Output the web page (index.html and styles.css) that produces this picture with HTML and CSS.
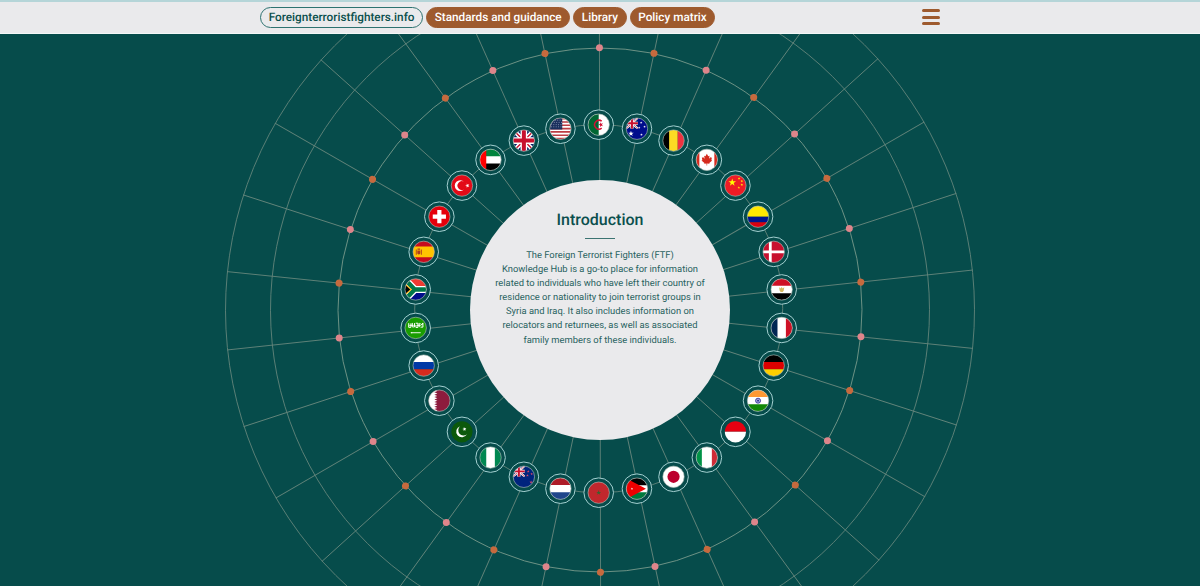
FILE: index.html
```html
<!DOCTYPE html>
<html lang="en">
<head>
<meta charset="utf-8">
<title>Foreignterroristfighters.info</title>
<link rel="stylesheet" href="styles.css">
</head>
<body>
<header class="topbar">
  <nav class="nav">
    <a class="pill pill-outline">Foreignterroristfighters.info</a>
    <a class="pill">Standards and guidance</a>
    <a class="pill">Library</a>
    <a class="pill">Policy matrix</a>
  </nav>
  <div class="menu"><span></span><span></span><span></span></div>
</header>
<main class="stage">
<svg class="wheel" width="1200" height="552" viewBox="0 34 1200 552">
  <defs>
    <clipPath id="round"><circle r="10.6"/></clipPath>
    <g id="ring"><circle class="ring" r="14.8"/></g>
    <circle id="rim" class="rim" r="10.7"/>
    <path id="star" d="M0-1 .23-.31H.95L.36.12.59.81 0 .38-.59.81-.36.12-.95-.31H-.23Z"/>
    <g id="jack">
      <path fill="#012169" d="M-12-12H12V12H-12Z"/>
      <path stroke="#fff" stroke-width="4.4" d="M-12-12 12 12M12-12-12 12"/>
      <path stroke="#c8102e" stroke-width="1.3" d="M-12-12 12 12M12-12-12 12"/>
      <path stroke="#fff" stroke-width="6.6" d="M0-12V12M-12 0H12"/>
      <path stroke="#c8102e" stroke-width="4" d="M0-12V12M-12 0H12"/>
    </g>
  </defs>
  <g transform="translate(600 310) rotate(-.12)">
    <g class="grid">
      <path id="sp" d="M0-375V375"/>
      <use href="#sp" transform="rotate(12)"/><use href="#sp" transform="rotate(24)"/><use href="#sp" transform="rotate(36)"/><use href="#sp" transform="rotate(48)"/><use href="#sp" transform="rotate(60)"/><use href="#sp" transform="rotate(72)"/><use href="#sp" transform="rotate(84)"/><use href="#sp" transform="rotate(96)"/><use href="#sp" transform="rotate(108)"/><use href="#sp" transform="rotate(120)"/><use href="#sp" transform="rotate(132)"/><use href="#sp" transform="rotate(144)"/><use href="#sp" transform="rotate(156)"/><use href="#sp" transform="rotate(168)"/>
      <circle r="374.5"/><circle r="329.5"/><circle class="strong" r="262"/>
      <circle cx="-1.3" cy="-1.3" r="184"/>
    </g>
    <circle class="dots pink" r="262.3" pathLength="360" transform="rotate(-90)"/>
    <circle class="dots orange" r="262.3" pathLength="360" transform="rotate(-78)"/>
  </g>
  <circle class="disc" cx="600" cy="310" r="130"/>
  <g transform="translate(598.7 308.7)">
    <g transform="translate(0 -184)"><use href="#ring"/><g clip-path="url(#round)"><path fill="#fff" d="M-12-12H12V12H-12Z"/><path fill="#006633" d="M-12-12H0V12H-12Z"/><path d="M3-3.5A4.4 4.4 0 1 0 3 3.5" fill="none" stroke="#d21034" stroke-width="1.5"/><use href="#star" transform="translate(2.2 0) rotate(-90) scale(2.6)" fill="#d21034"/></g><use href="#rim"/></g>
    <g transform="rotate(12) translate(0 -184) rotate(-12)"><use href="#ring"/><g clip-path="url(#round)"><path fill="#000d8c" d="M-12-12H12V12H-12Z"/><svg x="-11" y="-11" width="12" height="11" viewBox="-12 -12 24 24" preserveAspectRatio="none"><use href="#jack"/></svg><g fill="#fff"><use href="#star" transform="translate(-6 5) scale(2.9)"/><use href="#star" transform="translate(4.2 -6) scale(1.3)"/><use href="#star" transform="translate(7.6 -2) scale(1.3)"/><use href="#star" transform="translate(2.2 -1) scale(1.3)"/><use href="#star" transform="translate(4.5 6) scale(1.4)"/></g></g><use href="#rim"/></g>
    <g transform="rotate(24) translate(0 -184) rotate(-24)"><use href="#ring"/><g clip-path="url(#round)"><path d="M-12-12H-4V12H-12Z"/><path fill="#fdda24" d="M-4.4-12H4.2V12H-4.4Z"/><path fill="#ef3340" d="M4.2-12H12V12H4.2Z"/></g><use href="#rim"/></g>
    <g transform="rotate(36) translate(0 -184) rotate(-36)"><use href="#ring"/><g clip-path="url(#round)"><path fill="#fff" d="M-12-12H12V12H-12Z"/><path fill="#d52b1e" d="M-12-12H-7.5V12H-12ZM7.5-12H12V12H7.5ZM0-6 1.4-3.6 2.7-4.2 2.2-1 3.6-2.6 5-2.2 4.5.3 5.4.6 2.4 3.2 2.7 4 .3 3.6V5.7H-.3V3.6L-2.7 4-2.4 3.2-5.4.6-4.5.3-5-2.2-3.6-2.6-2.2-1-2.7-4.2-1.4-3.6Z"/></g><use href="#rim"/></g>
    <g transform="rotate(48) translate(0 -184) rotate(-48)"><use href="#ring"/><g clip-path="url(#round)"><path fill="#ee1c25" d="M-12-12H12V12H-12Z"/><g fill="#ff0"><use href="#star" transform="translate(-3.2 -3) scale(4)"/><use href="#star" transform="translate(3.6 -7.2) scale(1.4)"/><use href="#star" transform="translate(6.4 -4.4) scale(1.4)"/><use href="#star" transform="translate(6.4 -.8) scale(1.4)"/><use href="#star" transform="translate(3.4 2) scale(1.4)"/></g></g><use href="#rim"/></g>
    <g transform="rotate(60) translate(0 -184) rotate(-60)"><use href="#ring"/><g clip-path="url(#round)"><path fill="#ffe800" d="M-12-12H12V0H-12Z"/><path fill="#00148e" d="M-12 0H12V5.6H-12Z"/><path fill="#da0010" d="M-12 5.6H12V12H-12Z"/></g><use href="#rim"/></g>
    <g transform="rotate(72) translate(0 -184) rotate(-72)"><use href="#ring"/><g clip-path="url(#round)"><path fill="#c8102e" d="M-12-12H12V12H-12Z"/><path stroke="#fff" stroke-width="2.8" d="M-3.4-12V12M-12 0H12"/></g><use href="#rim"/></g>
    <g transform="rotate(84) translate(0 -184) rotate(-84)"><use href="#ring"/><g clip-path="url(#round)"><path fill="#fff" d="M-12-12H12V12H-12Z"/><path fill="#ce1126" d="M-12-12H12V-3.8H-12Z"/><path d="M-12 3.8H12V12H-12Z"/><path fill="#d6b962" d="M-2.6-2.2-.8-1 0-2.6.8-1 2.6-2.2 2 1.4 1 2.5H-1L-2 1.4Z"/></g><use href="#rim"/></g>
    <g transform="rotate(96) translate(0 -184) rotate(-96)"><use href="#ring"/><g clip-path="url(#round)"><path fill="#fff" d="M-12-12H12V12H-12Z"/><path fill="#002654" d="M-12-12H-4.2V12H-12Z"/><path fill="#ce1126" d="M4.2-12H12V12H4.2Z"/></g><use href="#rim"/></g>
    <g transform="rotate(108) translate(0 -184) rotate(-108)"><use href="#ring"/><g clip-path="url(#round)"><path d="M-12-12H12V-3.6H-12Z"/><path fill="#d00" d="M-12-3.6H12V3.6H-12Z"/><path fill="#ffce00" d="M-12 3.6H12V12H-12Z"/></g><use href="#rim"/></g>
    <g transform="rotate(120) translate(0 -184) rotate(-120)"><use href="#ring"/><g clip-path="url(#round)"><path fill="#fff" d="M-12-12H12V12H-12Z"/><path fill="#f93" d="M-12-12H12V-3.6H-12Z"/><path fill="#128807" d="M-12 3.6H12V12H-12Z"/><circle r="2.5" fill="#aaaade" stroke="#22228f" stroke-width=".8"/><circle r=".9" fill="#22228f"/></g><use href="#rim"/></g>
    <g transform="rotate(132) translate(0 -184) rotate(-132)"><use href="#ring"/><g clip-path="url(#round)"><path fill="#e70011" d="M-12-12H12V0H-12Z"/><path fill="#fff" d="M-12 0H12V12H-12Z"/></g></g>
    <g transform="rotate(144) translate(0 -184) rotate(-144)"><use href="#ring"/><g clip-path="url(#round)"><path fill="#fff" d="M-12-12H12V12H-12Z"/><path fill="#009246" d="M-12-12H-5V12H-12Z"/><path fill="#ce2b37" d="M5-12H12V12H5Z"/></g><use href="#rim"/></g>
    <g transform="rotate(156) translate(0 -184) rotate(-156)"><use href="#ring"/><g clip-path="url(#round)"><path fill="#fff" d="M-12-12H12V12H-12Z"/><circle r="6.1" fill="#bc002d"/></g><use href="#rim"/></g>
    <g transform="rotate(168) translate(0 -184) rotate(-168)"><use href="#ring"/><g clip-path="url(#round)"><path fill="#fff" d="M-12-12H12V12H-12Z"/><path d="M-12-12H12V-3.5H-12Z"/><path fill="#007a3d" d="M-12 3.5H12V12H-12Z"/><path fill="#e00" d="M-12-11 9 0-12 11Z"/><use href="#star" transform="translate(-5) scale(1.3)" fill="#fff"/></g><use href="#rim"/></g>
    <g transform="translate(0 184)"><use href="#ring"/><g clip-path="url(#round)"><path fill="#c1272d" d="M-12-12H12V12H-12Z"/><use href="#star" transform="scale(2.6)" fill="#35642f"/></g><use href="#rim"/></g>
    <g transform="rotate(192) translate(0 -184) rotate(-192)"><use href="#ring"/><g clip-path="url(#round)"><path fill="#fff" d="M-12-12H12V12H-12Z"/><path fill="#ae1c28" d="M-12-12H12V-3.6H-12Z"/><path fill="#21468b" d="M-12 3.6H12V12H-12Z"/></g><use href="#rim"/></g>
    <g transform="rotate(204) translate(0 -184) rotate(-204)"><use href="#ring"/><g clip-path="url(#round)"><path fill="#00247d" d="M-12-12H12V12H-12Z"/><svg x="-11" y="-11" width="12" height="11" viewBox="-12 -12 24 24" preserveAspectRatio="none"><use href="#jack"/></svg><g fill="#d84b67"><use href="#star" transform="translate(4.4 -5.4) scale(1.5)"/><use href="#star" transform="translate(7.8 -2.8) scale(1.4)"/><use href="#star" transform="translate(3.6 -1.4) scale(1.5)"/><use href="#star" transform="translate(7.2 5.4) scale(1.7)"/></g></g><use href="#rim"/></g>
    <g transform="rotate(216) translate(0 -184) rotate(-216)"><use href="#ring"/><g clip-path="url(#round)"><path fill="#008751" d="M-12-12H12V12H-12Z"/><path fill="#fff" d="M-4.3-12H4.3V12H-4.3Z"/></g><use href="#rim"/></g>
    <g transform="rotate(228) translate(0 -184) rotate(-228)"><use href="#ring"/><g clip-path="url(#round)"><path fill="#0c590b" d="M-12-12H12V12H-12Z"/><path fill="#fff" d="M-1.8-5.6A5.7 5.7 0 1 0 5 2.5 4.8 4.8 0 1 1-1.8-5.6Z"/><use href="#star" transform="translate(2.5 -2.7) rotate(-15) scale(2.2)" fill="#fff"/></g></g>
    <g transform="rotate(240) translate(0 -184) rotate(-240)"><use href="#ring"/><g clip-path="url(#round)"><path fill="#8d1b3d" d="M-12-12H12V12H-12Z"/><path fill="#fff" d="M-12-12H-4.6L-2-9.6-5-8.4-2-7.2-5-6-2-4.8-5-3.6-2-2.4-5-1.2-2 0-5 1.2-2 2.4-5 3.6-2 4.8-5 6-2 7.2-5 8.4-2 9.6-5 12H-12Z"/></g><use href="#rim"/></g>
    <g transform="rotate(252) translate(0 -184) rotate(-252)"><use href="#ring"/><g clip-path="url(#round)"><path fill="#fff" d="M-12-12H12V-3.6H-12Z"/><path fill="#0039a6" d="M-12-3.6H12V3.6H-12Z"/><path fill="#d52b1e" d="M-12 3.6H12V12H-12Z"/></g><use href="#rim"/></g>
    <g transform="rotate(264) translate(0 -184) rotate(-264)"><use href="#ring"/><g clip-path="url(#round)"><path fill="#199d00" d="M-12-12H12V12H-12Z"/><path d="M-7-4.8V-.6H-4.8V-4.6M-3.4-5V-1H-1.2V-4.8M0-4.7H2.2V-.5H.2V-3M3.5-5V-.8M4.9-4.5 6-2.8 7.2-5V-.8H4.8M-6.4-2.6H-2M1-2.6H5" fill="none" stroke="#fff"/><path d="M-5 4.8H5M-4 4.2V5.4" stroke="#fff" stroke-width=".9"/></g><use href="#rim"/></g>
    <g transform="rotate(276) translate(0 -184) rotate(-276)"><use href="#ring"/><g clip-path="url(#round)"><path fill="#ef3b32" d="M-12-12H12V0H-12Z"/><path fill="#000c8a" d="M-12 0H12V12H-12Z"/><path d="M-12-11.5-1 0H12M-12 11.5-1 0" fill="none" stroke="#fff" stroke-width="7"/><path d="M-12-11.5-1 0H12M-12 11.5-1 0" fill="none" stroke="#007749" stroke-width="4.4"/><path fill="#000" stroke="#ffb81c" stroke-width="1.1" d="M-12-6.5-4.5 0-12 6.5Z"/></g><use href="#rim"/></g>
    <g transform="rotate(288) translate(0 -184) rotate(-288)"><use href="#ring"/><g clip-path="url(#round)"><path fill="#c60b1e" d="M-12-12H12V12H-12Z"/><path fill="#ffc400" d="M-12-5.3H12V5.3H-12Z"/><path fill="#ad3c20" d="M-7.9-2.3H-7V3H-7.9ZM-2.8-2.3H-1.9V3H-2.8ZM-6.4-1.3H-3.4V1.7Q-4.9 3.7-6.4 1.7ZM-6.2-3.4H-3.6V-2H-6.2Z"/></g><use href="#rim"/></g>
    <g transform="rotate(300) translate(0 -184) rotate(-300)"><use href="#ring"/><g clip-path="url(#round)"><path fill="#e5000b" d="M-12-12H12V12H-12Z"/><path stroke="#fff" stroke-width="4.2" d="M0-6.6V6.6M-6.6 0H6.6"/></g><use href="#rim"/></g>
    <g transform="rotate(312) translate(0 -184) rotate(-312)"><use href="#ring"/><g clip-path="url(#round)"><path fill="#e30a17" d="M-12-12H12V12H-12Z"/><path fill="#fff" d="M2.2-3.6A5.4 5.4 0 1 0 2.2 3.6 4.3 4.3 0 1 1 2.2-3.6Z"/><use href="#star" transform="translate(5.5 .1) rotate(-90) scale(2.3)" fill="#fff"/></g><use href="#rim"/></g>
    <g transform="rotate(324) translate(0 -184) rotate(-324)"><use href="#ring"/><g clip-path="url(#round)"><path fill="#fff" d="M-12-12H12V12H-12Z"/><path fill="#00843d" d="M-12-12H12V-3.6H-12Z"/><path d="M-12 3.6H12V12H-12Z"/><path fill="#f00" d="M-12-12H-4.3V12H-12Z"/></g><use href="#rim"/></g>
    <g transform="rotate(336) translate(0 -184) rotate(-336)"><use href="#ring"/><g clip-path="url(#round)"><use href="#jack"/></g><use href="#rim"/></g>
    <g transform="rotate(348) translate(0 -184) rotate(-348)"><use href="#ring"/><g clip-path="url(#round)"><path fill="#fff" d="M-12-12H12V12H-12Z"/><path stroke="#bd3d44" stroke-width="1.6" d="M-12-10H12M-12-6.7H12M-12-3.4H12M-12-.1H12M-12 3.2H12M-12 6.5H12M-12 9.8H12"/><path fill="#192f5d" d="M-12-12H1.8V.7H-12Z"/><path stroke="#9aa5bf" stroke-width=".8" stroke-dasharray=".9 1.5" d="M-8-8.5H1.5M-9-6.3H1.5M-9.5-4.1H1.5M-9.5-1.9H1.5"/></g><use href="#rim"/></g>
  </g>
</svg>
<section class="intro">
  <h1>Introduction</h1>
  <hr>
  <p>The Foreign Terrorist Fighters (FTF)<br>Knowledge Hub is a go-to place for information<br>related to individuals who have left their country of<br>residence or nationality to join terrorist groups in<br>Syria and Iraq. It also includes information on<br>relocators and returnees, as well as associated<br>family members of these individuals.</p>
</section>
</main>
</body>
</html>
```
FILE: styles.css
```css
* { box-sizing: border-box; }
body {
  margin: 0;
  height: 586px;
  overflow: hidden;
  background: #064c4b;
  font-family: Roboto, "Liberation Sans", sans-serif;
  text-rendering: geometricPrecision;
  color: #0b4f4d;
}
.topbar {
  height: 34px;
  padding: 5px 260px 0;
  display: flex;
  justify-content: space-between;
  background: #eaeaec;
  border-top: 2px solid #b5d5d8;
  border-bottom: 1px solid #f3f7f7;
}
.nav { display: flex; gap: 2.8px; }
.pill {
  height: 21px;
  padding: 0 7.7px;
  border: 1px solid #9e5a2e;
  border-radius: 11px;
  background: #9e5a2e;
  color: #fff;
  font-size: 11.75px;
  font-weight: 500;
  line-height: 19px;
  white-space: nowrap;
}
.pill-outline {
  background: none;
  border-color: #2d7270;
  color: #0b4f4d;
}
.menu {
  width: 18px;
  padding-top: 2px;
  display: flex;
  flex-direction: column;
  gap: 3.5px;
}
.menu span { height: 3px; border-radius: 1.5px; background: #9e5a2e; }
.stage { display: grid; height: 552px; }
.wheel, .intro { grid-area: 1 / 1; }
.wheel { display: block; }
.grid { fill: none; stroke: #63847a; stroke-width: .9; }
.grid .strong { stroke: #789a8b; }
.dots { fill: none; stroke-width: 7; stroke-linecap: round; stroke-dasharray: 0 24; }
.pink { stroke: #de858b; }
.orange { stroke: #c66a3e; }
.disc { fill: #eaeaec; }
.ring { fill: #064c4b; stroke: #a4d0d1; stroke-width: 1; }
.rim { fill: none; stroke: #b9c4bd; stroke-width: .6; }
.intro {
  justify-self: center;
  width: 240px;
  padding-top: 176px;
  text-align: center;
}
.intro h1 { margin: 0; font-size: 16px; font-weight: 500; line-height: 20px; }
.intro hr { width: 30px; margin: 8px auto 10px; border: 0; border-top: 1px solid #3c7472; }
.intro p { margin: 0; font-size: 9.38px; line-height: 14.1px; white-space: nowrap; color: #28625f; }
```
